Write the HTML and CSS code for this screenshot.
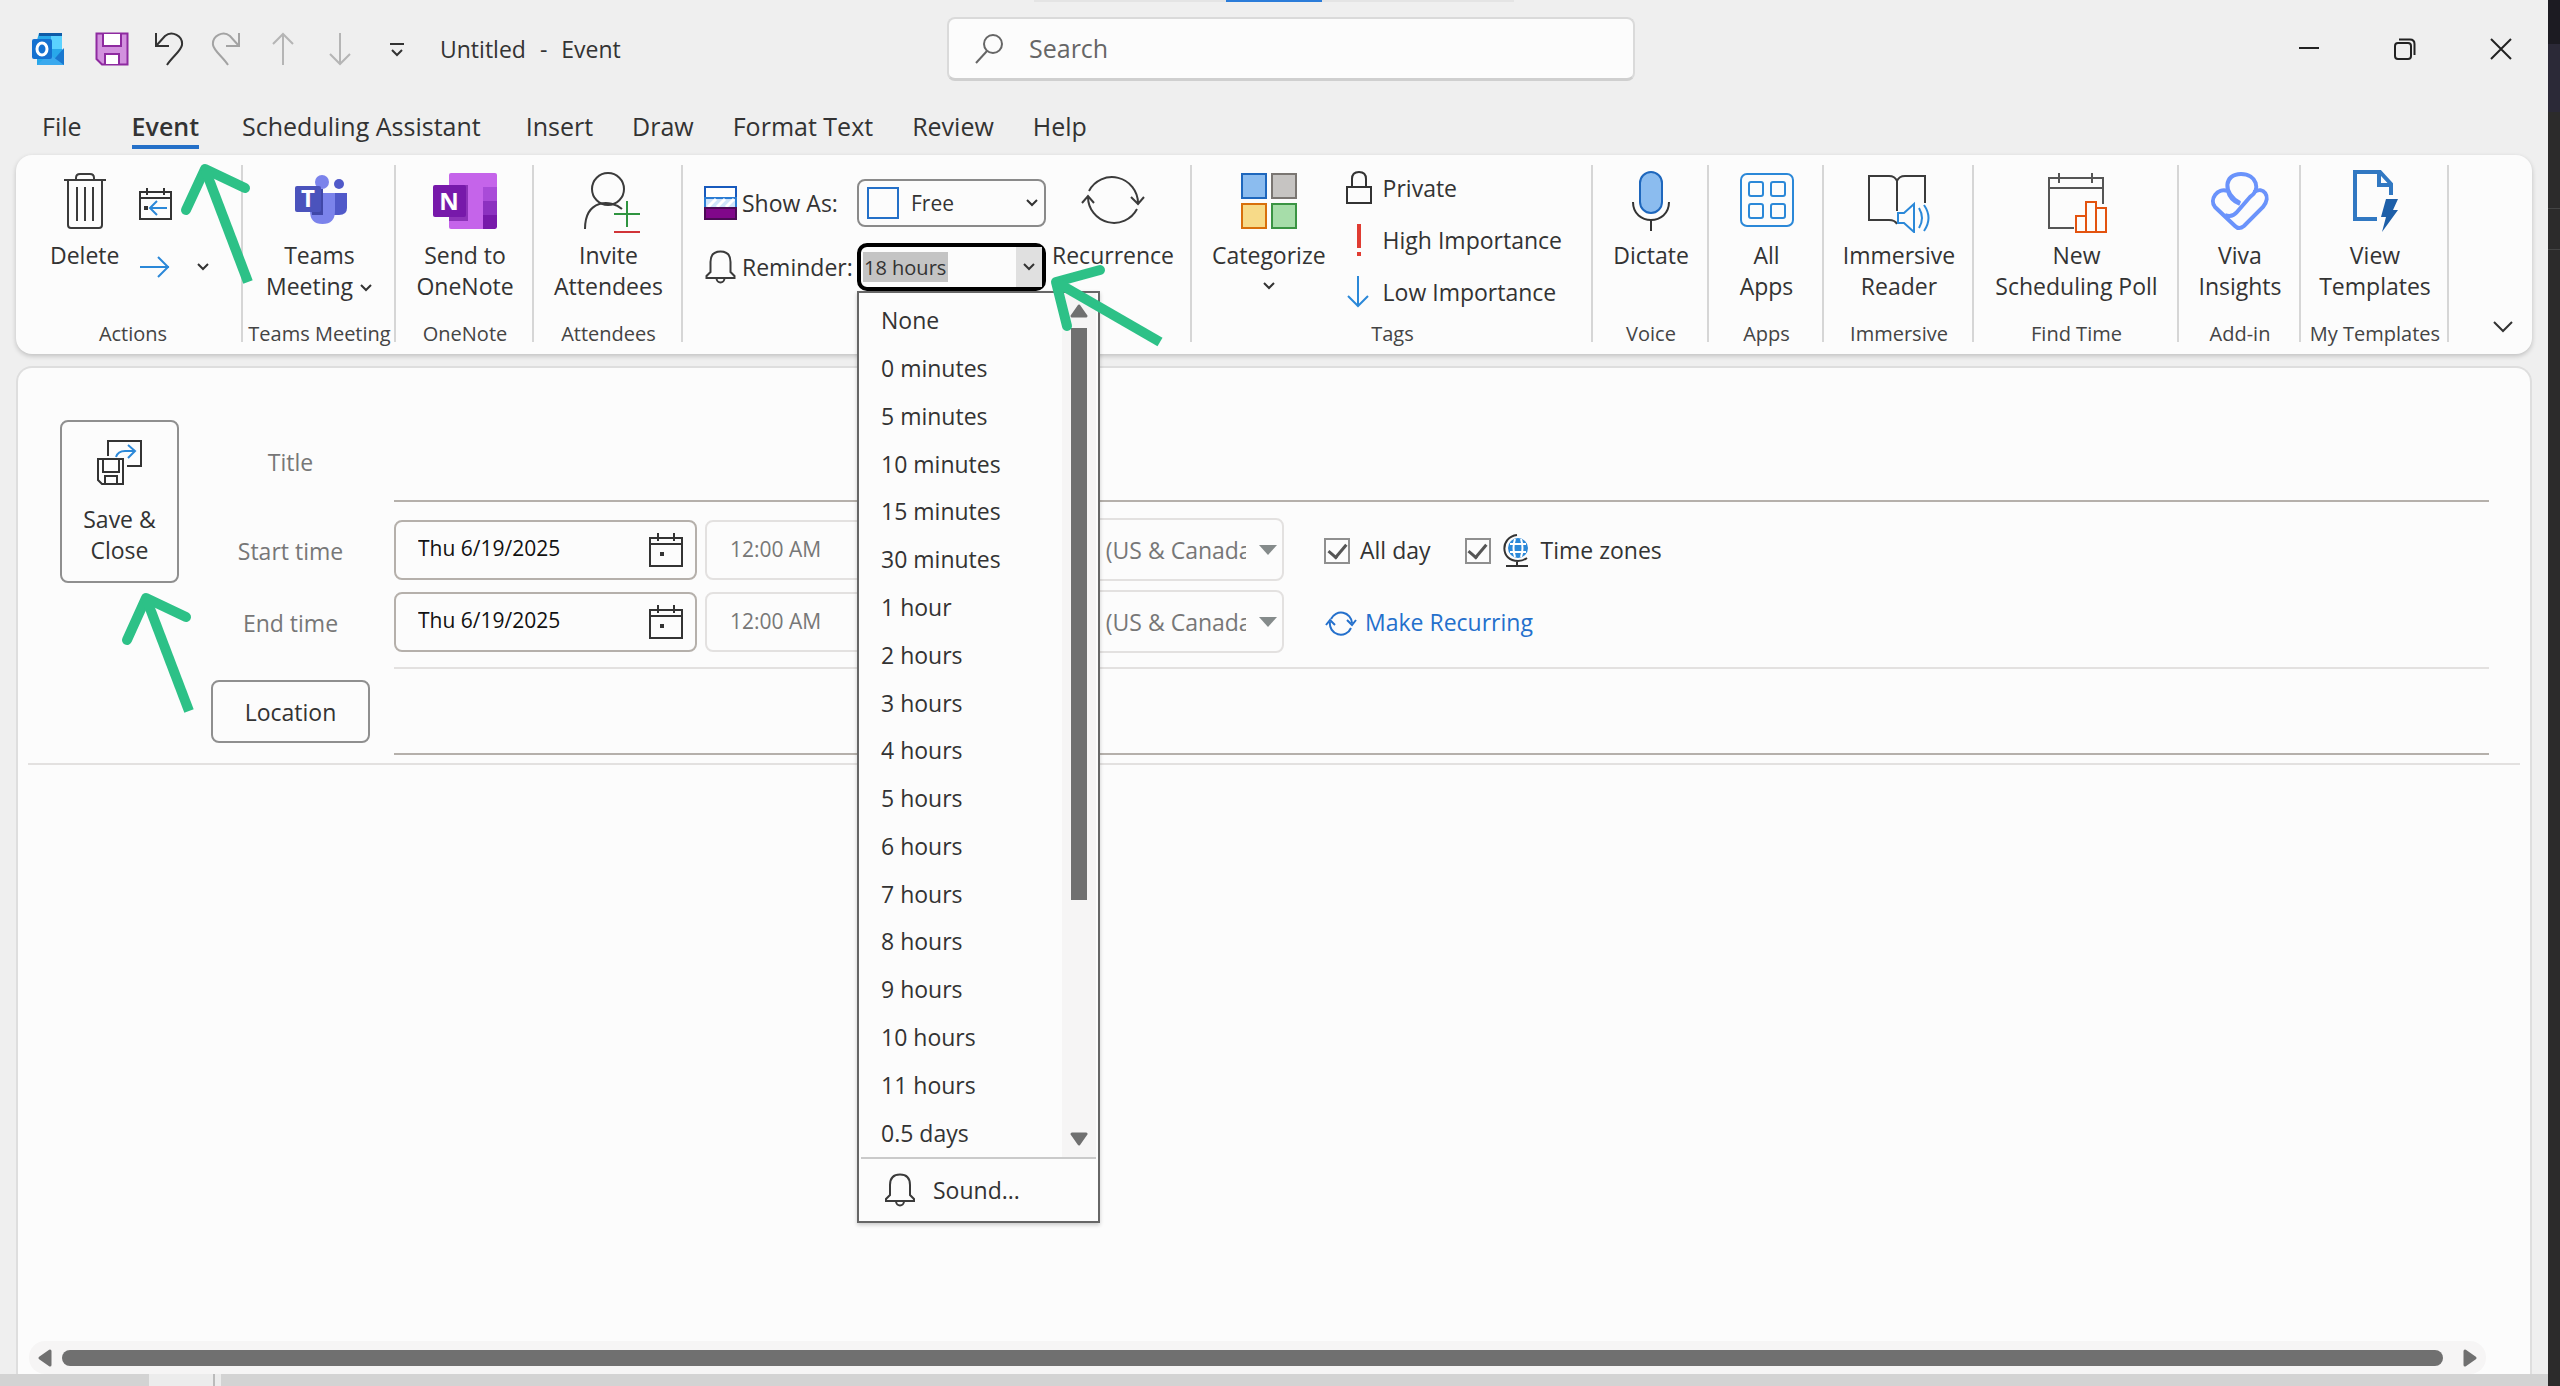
FILE: index.html
```html
<!DOCTYPE html>
<html lang="en">
<head>
  <meta charset="UTF-8">
  <meta name="viewport" content="width=device-width, initial-scale=1.0">
  <title>Untitled - Event</title>
  <link rel="stylesheet" href="styles.css">
</head>
<body>

<!-- Shared icons -->
<svg class="symbols" aria-hidden="true">
  <symbol id="bell" viewBox="0 0 32 34">
    <path d="M2 28V26L6 22V12C6 5 10 1.500 16 1.500S26 5 26 12V22L30 26V28ZM12 28C12 34 20 34 20 28" fill="none" stroke="#3b3b3b" stroke-width="2"/>
  </symbol>
  <symbol id="chevron" viewBox="0 0 14 10">
    <path d="M2 2L7 7L12 2" fill="none" stroke="#333" stroke-width="2"/>
  </symbol>
  <symbol id="calendar" viewBox="0 0 34 34">
    <path d="M1 5H33V33H1ZM1 11H33M9 0V8M25 0V8" fill="none" stroke="#333" stroke-width="2"/>
    <rect x="11" y="19" width="4" height="4" fill="#333"/>
  </symbol>
</svg>

<div class="window">
  <div class="tab-strip"><div class="tab-strip-active"></div></div>

  <!-- Title bar -->
  <header class="title-bar">
    <div class="quick-access">
      <svg class="logo" width="34" height="34" viewBox="0 0 34 34">
        <path d="M8 1H31V17L33 19V33H6V8Z" fill="#28a8ea"/>
        <path d="M20 3H31V17H20Z" fill="#5bd2ff"/>
        <path d="M8 1H31V4H8Z" fill="#0f5ca8"/>
        <path d="M33 16V33H18Z" fill="#1a78cf"/>
        <path d="M6 33L18 22L33 33Z" fill="#3aa9ee"/>
        <rect x="1" y="7" width="20" height="20" rx="2" fill="#1571d0"/>
        <ellipse cx="11" cy="17" rx="5" ry="6" fill="none" stroke="#fff" stroke-width="3"/>
      </svg>
      <button class="qa-button" aria-label="Save">
        <svg width="34" height="34" viewBox="0 0 34 34">
          <path d="M1.500 1.500H32.500V32.500H7L1.500 27Z" fill="#d291de" stroke="#8e2aa0" stroke-width="2"/>
          <path d="M8 2V14H26V2M10 32V22H24V32" fill="#fff" stroke="#8e2aa0" stroke-width="2"/>
        </svg>
      </button>
      <button class="qa-button" aria-label="Undo">
        <svg width="34" height="34" viewBox="0 0 34 34"><path d="M4 1V14H17M4 14L13 4C20 -2 31 4 30 13C29 19 20 25 15 33" fill="none" stroke="#333" stroke-width="2"/></svg>
      </button>
      <button class="qa-button" aria-label="Redo">
        <svg width="34" height="34" viewBox="0 0 34 34"><path d="M30 1V14H17M30 14L21 4C14 -2 3 4 4 13C5 19 14 25 19 33" fill="none" stroke="#a3a3a3" stroke-width="2"/></svg>
      </button>
      <button class="qa-button" aria-label="Previous item">
        <svg width="34" height="34" viewBox="0 0 34 34"><path d="M17 33V2M7 12L17 2L27 12" fill="none" stroke="#b5b5b5" stroke-width="2"/></svg>
      </button>
      <button class="qa-button" aria-label="Next item">
        <svg width="34" height="34" viewBox="0 0 34 34"><path d="M17 1V32M7 22L17 32L27 22" fill="none" stroke="#b5b5b5" stroke-width="2"/></svg>
      </button>
      <button class="qa-button" aria-label="Customize Quick Access Toolbar">
        <svg width="34" height="34" viewBox="0 0 34 34"><path d="M10 12H24M12 18L17 23L22 18" fill="none" stroke="#333" stroke-width="2"/></svg>
      </button>
      <div class="window-title"><span>Untitled</span><span>-</span><span>Event</span></div>
    </div>
    <label class="search">
      <svg width="30" height="32" viewBox="0 0 30 32"><circle cx="19" cy="11" r="9" fill="none" stroke="#666" stroke-width="2"/><path d="M13 18L2 30" stroke="#666" stroke-width="2"/></svg>
      <input type="text" placeholder="Search" aria-label="Search">
    </label>
    <div class="window-controls">
      <button aria-label="Minimize"><svg width="22" height="22" viewBox="0 0 22 22"><path d="M1 10H21" stroke="#222" stroke-width="2"/></svg></button>
      <button aria-label="Restore"><svg width="22" height="22" viewBox="0 0 22 22"><rect x="1" y="5" width="16" height="16" rx="3" fill="none" stroke="#222" stroke-width="2"/><path d="M5 1.500H16Q20.500 1.500 20.500 6V17" fill="none" stroke="#222" stroke-width="2"/></svg></button>
      <button aria-label="Close"><svg width="22" height="22" viewBox="0 0 22 22"><path d="M1 1L21 21M21 1L1 21" stroke="#222" stroke-width="2"/></svg></button>
    </div>
  </header>

  <!-- Ribbon tabs -->
  <nav class="tabs">
    <button class="tab tab-file">File</button>
    <button class="tab active">Event</button>
    <button class="tab tab-scheduling">Scheduling Assistant</button>
    <button class="tab">Insert</button>
    <button class="tab">Draw</button>
    <button class="tab">Format Text</button>
    <button class="tab">Review</button>
    <button class="tab">Help</button>
  </nav>

  <!-- Ribbon -->
  <section class="ribbon">
    <div class="group group-actions">
      <div class="group-body">
        <button class="big-button">
          <svg class="big-icon" viewBox="0 0 64 64"><path d="M11 11H53M15 11V56Q15 59 18 59H46Q49 59 49 56V11M23 11V9Q23 5 27 5H37Q41 5 41 9V11M24 18V52M32 18V52M40 18V52" fill="none" stroke="#3b3b3b" stroke-width="2"/></svg>
          <span>Delete</span>
        </button>
        <div class="small-buttons">
          <button aria-label="Copy to My Calendar"><svg width="34" height="34" viewBox="0 0 34 34"><path d="M1 5H32V32H1ZM1 11H32M8 1V8M25 1V8" fill="none" stroke="#333" stroke-width="2"/><rect x="5" y="19" width="4" height="4" fill="#333"/><path d="M28 21H11M18 14L11 21L18 28" fill="none" stroke="#2b88d8" stroke-width="2"/></svg></button>
          <div class="forward">
            <button aria-label="Forward"><svg width="34" height="24" viewBox="0 0 34 24"><path d="M1 12H30M19 2L29 12L19 22" fill="none" stroke="#2b88d8" stroke-width="2"/></svg></button>
            <button aria-label="More forward options"><svg width="14" height="10"><use href="#chevron"/></svg></button>
          </div>
        </div>
      </div>
      <div class="group-label">Actions</div>
    </div>

    <div class="group group-teams">
      <div class="group-body">
        <button class="big-button">
          <svg class="big-icon" viewBox="0 0 64 64">
            <circle cx="34" cy="13" r="7" fill="#7b83eb"/><circle cx="51" cy="15" r="5" fill="#5059c9"/>
            <path d="M43 24H59V39Q59 46 51 46H43Z" fill="#5059c9"/>
            <path d="M22 24H47V42Q47 55 34.500 55T22 42Z" fill="#7b83eb"/>
            <path d="M22 20H35V46H24Z" fill="#4047a8"/>
            <rect x="7" y="17" width="26" height="26" rx="2" fill="#4b53bc"/>
            <text x="20" y="38" class="logo-letter">T</text>
          </svg>
          <span>Teams</span><span>Meeting <svg width="14" height="14" viewBox="0 -2 14 14"><use href="#chevron" width="14" height="10"/></svg></span>
        </button>
      </div>
      <div class="group-label">Teams Meeting</div>
    </div>

    <div class="group group-onenote">
      <div class="group-body">
        <button class="big-button">
          <svg class="big-icon" viewBox="0 0 64 64">
            <rect x="16" y="4" width="48" height="56" rx="2" fill="#c564ea"/>
            <path d="M50 18H64V32H50Z" fill="#a94bd8"/><path d="M50 32H64V46H50Z" fill="#8c31c0"/><path d="M50 46H64V58L62 60H50Z" fill="#7719aa"/>
            <path d="M16 16H35V52H16Z" fill="#681297" opacity="0.600"/>
            <rect x="0" y="16" width="33" height="32" rx="2" fill="#7719aa"/>
            <text x="16" y="41" class="logo-letter">N</text>
          </svg>
          <span>Send to</span><span>OneNote</span>
        </button>
      </div>
      <div class="group-label">OneNote</div>
    </div>

    <div class="group group-attendees">
      <div class="group-body">
        <button class="big-button">
          <svg class="big-icon" viewBox="0 0 64 64"><ellipse cx="32" cy="20" rx="16" ry="16" fill="none" stroke="#3b3b3b" stroke-width="2"/><path d="M9 60C9 30 35 30 46 40" fill="none" stroke="#3b3b3b" stroke-width="2"/><path d="M38 45H64M51 32V58" stroke="#2f9440" stroke-width="2"/><path d="M38 63H64" stroke="#d13438" stroke-width="2"/></svg>
          <span>Invite</span><span>Attendees</span>
        </button>
      </div>
      <div class="group-label">Attendees</div>
    </div>

    <div class="group group-options">
      <div class="group-body">
        <div class="options">
          <div class="option-row">
            <label for="showAs">
              <svg width="33" height="34" viewBox="0 0 33 34">
                <path d="M1 1H32V12H1Z" fill="#fff" stroke="#185abd" stroke-width="2"/>
                <path d="M1 12H32V22H1Z" fill="#cfe4fa" stroke="#2b7cd3" stroke-width="2"/>
                <path d="M4 21L12 13M13 21L21 13M22 21L30 13" stroke="#fff" stroke-width="3"/>
                <path d="M1 22H32V33H1Z" fill="#80078a" stroke="#4b0a55" stroke-width="2"/>
              </svg>
              Show As:
            </label>
            <div class="show-as">
              <span class="free-swatch"></span>
              <select id="showAs"><option>Free</option><option>Tentative</option><option>Busy</option></select>
              <svg class="show-as-chevron" width="14" height="10"><use href="#chevron"/></svg>
            </div>
          </div>
          <div class="option-row">
            <label for="reminder"><svg width="33" height="34"><use href="#bell"/></svg>Reminder:</label>
            <div class="reminder">
              <input id="reminder" type="text" value="18 hours">
              <button aria-label="Open reminder list"><svg width="14" height="10"><use href="#chevron"/></svg></button>
              <div class="reminder-menu">
                <div class="reminder-scroll">
                  <ul role="listbox" aria-label="Reminder">
                    <li role="option">None</li>
                    <li role="option">0 minutes</li>
                    <li role="option">5 minutes</li>
                    <li role="option">10 minutes</li>
                    <li role="option">15 minutes</li>
                    <li role="option">30 minutes</li>
                    <li role="option">1 hour</li>
                    <li role="option">2 hours</li>
                    <li role="option">3 hours</li>
                    <li role="option">4 hours</li>
                    <li role="option">5 hours</li>
                    <li role="option">6 hours</li>
                    <li role="option">7 hours</li>
                    <li role="option">8 hours</li>
                    <li role="option">9 hours</li>
                    <li role="option">10 hours</li>
                    <li role="option">11 hours</li>
                    <li role="option">0.5 days</li>
                  </ul>
                  <div class="v-scrollbar">
                    <svg width="18" height="14" viewBox="0 0 18 14"><path d="M9 2L16 12H2Z" fill="#707070" stroke="#707070" stroke-width="3" stroke-linejoin="round"/></svg>
                    <div class="v-track"><div class="v-thumb"></div></div>
                    <svg width="18" height="14" viewBox="0 0 18 14"><path d="M9 12L16 2H2Z" fill="#707070" stroke="#707070" stroke-width="3" stroke-linejoin="round"/></svg>
                  </div>
                </div>
                <button class="sound"><svg width="32" height="34"><use href="#bell"/></svg>Sound...</button>
              </div>
            </div>
          </div>
        </div>
        <button class="big-button">
          <svg class="big-icon" viewBox="0 0 64 64"><path d="M8 22A26 26 0 0 1 57 34M56 40A26 26 0 0 1 7 28M50 28L57 35L63 28M1 34L7 27L13 34" fill="none" stroke="#3b3b3b" stroke-width="2"/></svg>
          <span>Recurrence</span>
        </button>
      </div>
    </div>

    <div class="group group-tags">
      <div class="group-body">
        <button class="big-button">
          <svg class="big-icon" viewBox="0 0 64 64"><rect x="5" y="5" width="24" height="24" fill="#8bbcef" stroke="#1e67bd" stroke-width="2"/><rect x="35" y="5" width="24" height="24" fill="#c6c4c2" stroke="#7a7672" stroke-width="2"/><rect x="5" y="35" width="24" height="24" fill="#f7da88" stroke="#d86f0c" stroke-width="2"/><rect x="35" y="35" width="24" height="24" fill="#a6dda9" stroke="#3a9443" stroke-width="2"/></svg>
          <span>Categorize</span><span><svg width="14" height="14" viewBox="0 0 14 14"><use href="#chevron" width="14" height="10"/></svg></span>
        </button>
        <div class="tag-list">
          <button><svg width="26" height="34" viewBox="0 0 26 34"><path d="M1 16H25V32H1ZM6 16V8Q6 1 13 1T20 8V16" fill="none" stroke="#333" stroke-width="2"/></svg>Private</button>
          <button><svg width="26" height="34" viewBox="0 0 26 34"><path d="M13 1V25M13 29V33" stroke="#e03c32" stroke-width="4"/></svg>High Importance</button>
          <button><svg width="26" height="34" viewBox="0 0 26 34"><path d="M12 1V31M2 21L12 31L22 21" fill="none" stroke="#2b88d8" stroke-width="2"/></svg>Low Importance</button>
        </div>
      </div>
      <div class="group-label">Tags</div>
    </div>

    <div class="group group-voice">
      <div class="group-body">
        <button class="big-button">
          <svg class="big-icon" viewBox="0 0 64 64"><rect x="21" y="3" width="22" height="41" rx="11" fill="#8bbcef" stroke="#1e67bd" stroke-width="2"/><path d="M14 33C14 57 50 57 50 33M32 51V62" fill="none" stroke="#333" stroke-width="2"/></svg>
          <span>Dictate</span>
        </button>
      </div>
      <div class="group-label">Voice</div>
    </div>

    <div class="group group-apps">
      <div class="group-body">
        <button class="big-button">
          <svg class="big-icon" viewBox="0 0 64 64" fill="none" stroke="#2b88d8" stroke-width="2"><rect x="6" y="5" width="52" height="52" rx="6"/><rect x="14" y="13" width="14" height="14" rx="2"/><rect x="36" y="13" width="14" height="14" rx="2"/><rect x="14" y="35" width="14" height="14" rx="2"/><rect x="36" y="35" width="14" height="14" rx="2"/></svg>
          <span>All</span><span>Apps</span>
        </button>
      </div>
      <div class="group-label">Apps</div>
    </div>

    <div class="group group-immersive">
      <div class="group-body">
        <button class="big-button">
          <svg class="big-icon" viewBox="0 0 64 64" fill="none" stroke="#3b3b3b" stroke-width="2"><path d="M30 42V12Q28 7 22 7H2V51H22Q28 51 30 55M30 12Q32 7 38 7H58V34"/><path d="M31 44H37L47 35V63L37 54H31ZM52 39Q58 49 52 59M57 36Q66 49 57 62" stroke="#2b88d8"/></svg>
          <span>Immersive</span><span>Reader</span>
        </button>
      </div>
      <div class="group-label">Immersive</div>
    </div>

    <div class="group group-findtime">
      <div class="group-body">
        <button class="big-button">
          <svg class="big-icon" viewBox="0 0 64 64" fill="none" stroke="#555" stroke-width="2"><path d="M30 59H5V9H59V35M5 19H59M15 4V14M48 4V14"/><path d="M32 63V47H42V63ZM42 63V33H52V63ZM52 63V39H62V63Z" stroke="#e3530f"/></svg>
          <span>New</span><span>Scheduling Poll</span>
        </button>
      </div>
      <div class="group-label">Find Time</div>
    </div>

    <div class="group group-addin">
      <div class="group-body">
        <button class="big-button">
          <svg class="big-icon" viewBox="0 0 64 64" fill="none" stroke="#6a93fb" stroke-width="4"><path d="M32 34C14 24 16 5 33 5C49 5 53 21 42 28L29 43Q24 49 17 46"/><path d="M20 22C9 18 1 31 7 38L27 57Q31 61 36 57L55 38C64 27 55 17 46 23M20 22Q22 31 32 35"/></svg>
          <span>Viva</span><span>Insights</span>
        </button>
      </div>
      <div class="group-label">Add-in</div>
    </div>

    <div class="group group-templates">
      <div class="group-body">
        <button class="big-button">
          <svg class="big-icon" viewBox="0 0 64 64"><path d="M34 50H12V3H37L48 15V26M36 3V16H48" fill="none" stroke="#3178c2" stroke-width="4"/><path d="M43 30H55L50 41H55L39 63L43 48H38Z" fill="#1e5fa8"/></svg>
          <span>View</span><span>Templates</span>
        </button>
      </div>
      <div class="group-label">My Templates</div>
    </div>

    <button class="collapse" aria-label="Ribbon display options"><svg width="22" height="14" viewBox="0 0 22 14"><path d="M2 2L11 11L20 2" fill="none" stroke="#333" stroke-width="2"/></svg></button>
  </section>

  <!-- Event form -->
  <main class="panel">
    <form class="event-form">
      <button type="button" class="outline-button save-close">
        <svg width="46" height="46" viewBox="0 0 46 46">
          <path d="M11 16V1H44V26H30M1 19H26V44H5L1 40ZM6 19V32H22V19M8 44V36H20V44" fill="none" stroke="#333" stroke-width="2"/>
          <path d="M19 17Q21 11 28 11H37M31 5L38 11L31 18" fill="none" stroke="#2b88d8" stroke-width="2"/>
        </svg>
        <span>Save &amp;</span><span>Close</span>
      </button>
      <div class="fields">
        <div class="row row-title">
          <label for="title">Title</label>
          <input id="title" class="line-input" type="text">
        </div>
        <div class="row">
          <label for="startDate">Start time</label>
          <div class="time-fields">
            <div class="date-box"><input id="startDate" type="text" value="Thu 6/19/2025"><button type="button" aria-label="Pick start date"><svg width="34" height="34"><use href="#calendar"/></svg></button></div>
            <input class="time-box" type="text" value="12:00 AM" aria-label="Start hour" disabled>
            <div class="zone"><select aria-label="Start time zone" disabled><option>Eastern Time (US &amp; Canada)</option></select></div>
            <label class="check"><input type="checkbox" checked>All day</label>
            <label class="check">
              <input type="checkbox" checked>
              <svg class="globe" width="26" height="34" viewBox="0 0 26 34">
                <circle cx="15" cy="14" r="10" fill="#2b88d8"/>
                <path d="M7 10H23M7 18H23M12 5Q9 14 12 23M18 5Q21 14 18 23" fill="none" stroke="#fff" stroke-width="2"/>
                <path d="M14 1C-3 3 -3 27 15 27Q20 27 24 24M14 27V32M3 32H25" fill="none" stroke="#333" stroke-width="2"/>
              </svg>
              Time zones
            </label>
          </div>
        </div>
        <div class="row">
          <label for="endDate">End time</label>
          <div class="time-fields">
            <div class="date-box"><input id="endDate" type="text" value="Thu 6/19/2025"><button type="button" aria-label="Pick end date"><svg width="34" height="34"><use href="#calendar"/></svg></button></div>
            <input class="time-box" type="text" value="12:00 AM" aria-label="End hour" disabled>
            <div class="zone"><select aria-label="End time zone" disabled><option>Eastern Time (US &amp; Canada)</option></select></div>
            <a class="recurring" href="#">
              <svg width="32" height="26" viewBox="0 0 32 26"><path d="M6 9A11 11 0 0 1 27 13M26 18A11 11 0 0 1 5 12M22 10L27 15L31 10M1 15L5 10L10 15" fill="none" stroke="#2470cc" stroke-width="2"/></svg>
              Make Recurring
            </a>
          </div>
        </div>
        <div class="row row-location">
          <button type="button" class="outline-button location">Location</button>
          <input class="line-input" type="text" aria-label="Location">
        </div>
      </div>
    </form>
    <div class="h-scrollbar">
      <svg width="14" height="18" viewBox="0 0 14 18"><path d="M2 9L12 2V16Z" fill="#707070" stroke="#707070" stroke-width="3" stroke-linejoin="round"/></svg>
      <div class="h-thumb"></div>
      <svg width="14" height="18" viewBox="0 0 14 18"><path d="M12 9L2 2V16Z" fill="#707070" stroke="#707070" stroke-width="3" stroke-linejoin="round"/></svg>
    </div>
  </main>
  <div class="bottom-strip"><div class="bottom-tab"></div></div>
</div>
<div class="backdrop"><div class="backdrop-top"></div><div class="backdrop-mid"></div><div class="backdrop-gap"></div><div class="backdrop-row"></div></div>

<!-- Pointer arrows -->
<svg class="arrows" width="1240" height="740" viewBox="0 0 1240 740" aria-hidden="true">
  <g fill="none" stroke="#2dc187" stroke-width="10" stroke-linejoin="round">
    <path d="M186 210L205 169L245 188" stroke-linecap="round"/><path d="M205 169L248 282"/>
    <path d="M1100 270L1056 282L1067 326" stroke-linecap="round"/><path d="M1056 282L1160 342"/>
    <path d="M127 640L146 598L186 617" stroke-linecap="round"/><path d="M146 598L189 711"/>
  </g>
</svg>

</body>
</html>
```
FILE: styles.css
```css
/* Base */
* {
  box-sizing: border-box;
}
body {
  margin: 0;
  display: flex;
  min-height: 100vh;
  background-color: #efefef;
  color: #333;
  font-family: "Open Sans", "Noto Sans", sans-serif;
  font-size: 23px;
  line-height: 31px;
}
button, input, select {
  font: inherit;
  color: inherit;
  border: none;
  background: none;
  padding: 0;
  margin: 0;
  min-width: 0;
  outline: none;
}
svg {
  flex: none;
}
.symbols {
  position: absolute;
  width: 0;
  height: 0;
}
.window {
  flex: 1;
  min-width: 0;
  display: flex;
  flex-direction: column;
}
.tab-strip {
  width: 480px;
  height: 2px;
  margin-left: 1034px;
  background-color: #e4e4e4;
}
.tab-strip-active {
  width: 96px;
  height: 2px;
  margin: 0 auto;
  background-color: #2b7cd9;
}

/* Title bar */
.title-bar {
  display: grid;
  grid-template-columns: 947px minmax(0, 688px) 1fr;
  align-items: center;
  height: 94px;
}
.quick-access {
  display: flex;
  align-items: center;
  gap: 23px;
  padding-left: 31px;
}
.logo {
  margin-right: 7px;
}
.qa-button {
  display: flex;
}
.window-title {
  display: flex;
  gap: 14px;
  margin-left: 3px;
}
.search {
  display: flex;
  align-items: center;
  gap: 25px;
  height: 64px;
  padding: 0 25px;
  background-color: #fcfcfc;
  border: 2px solid #dadada;
  border-bottom: 3px solid #cfcfcf;
  border-radius: 8px;
  font-size: 25px;
}
.search input {
  flex: 1;
}
.search input::placeholder {
  color: #666;
  opacity: 1;
}
.window-controls {
  display: flex;
  justify-content: flex-end;
  gap: 74px;
  padding-right: 36px;
}
.window-controls button {
  display: flex;
}

/* Tabs */
.tabs {
  display: flex;
  gap: 39px;
  height: 59px;
  padding: 14px 42px 0;
  font-size: 25px;
}
.tab {
  height: 39px;
  line-height: 33px;
  padding-bottom: 6px;
}
.tab-file {
  margin-right: 11px;
}
.tab-scheduling {
  margin: 0 6px 0 4px;
}
.tab.active {
  font-weight: 600;
  background: linear-gradient(#2470c8, #2470c8) bottom / 100% 4px no-repeat;
}

/* Ribbon */
.ribbon {
  display: flex;
  height: 199px;
  margin: 0 16px;
  background-color: #fcfcfc;
  border-radius: 16px;
  box-shadow: 0 2px 5px rgba(0, 0, 0, 0.2);
}
.group {
  position: relative;
  display: flex;
  flex-direction: column;
  padding-bottom: 8px;
}
.group::after {
  content: "";
  position: absolute;
  top: 10px;
  right: 0;
  bottom: 12px;
  width: 2px;
  background-color: #d6d6d6;
}
.group-body {
  flex: 1;
  display: flex;
  justify-content: center;
}
.group-label {
  font-size: 20px;
  line-height: 24px;
  text-align: center;
  color: #444;
}
.group-actions {
  width: 227px;
  padding-left: 7px;
}
.group-teams { width: 153px; }
.group-onenote { width: 138px; }
.group-attendees { width: 149px; }
.group-options { width: 509px; }
.group-tags { width: 401px; }
.group-voice { width: 116px; }
.group-apps { width: 115px; }
.group-immersive { width: 150px; }
.group-findtime { width: 205px; }
.group-addin { width: 122px; }
.group-templates { width: 148px; }
.big-button {
  display: flex;
  flex-direction: column;
  align-items: center;
  padding-top: 14px;
  white-space: nowrap;
}
.big-icon {
  width: 64px;
  height: 64px;
  margin-bottom: 7px;
}
.logo-letter {
  fill: #fff;
  font-size: 24px;
  font-weight: 700;
  text-anchor: middle;
}
.group-actions .group-body {
  justify-content: flex-start;
  padding-left: 27px;
  gap: 20px;
}
.small-buttons {
  display: flex;
  flex-direction: column;
  gap: 34px;
  padding-top: 32px;
}
.small-buttons button {
  display: flex;
}
.forward {
  display: flex;
  align-items: center;
  gap: 23px;
}

/* Show As and Reminder */
.options {
  display: flex;
  flex-direction: column;
  gap: 16px;
  padding-top: 24px;
}
.group-options .group-body {
  justify-content: flex-start;
  padding-left: 21px;
  gap: 6px;
}
.option-row {
  display: flex;
  gap: 3px;
}
.option-row label {
  display: flex;
  align-items: center;
  gap: 5px;
  width: 150px;
  white-space: nowrap;
}
.show-as {
  display: flex;
  align-items: center;
  width: 189px;
  height: 48px;
  padding: 0 5px 0 8px;
  border: 2px solid #8a8a8a;
  border-radius: 8px;
  font-size: 21px;
}
.free-swatch {
  flex: none;
  width: 32px;
  height: 32px;
  border: 2px solid #2470c8;
}
.show-as select {
  flex: 1;
  appearance: none;
  padding-left: 12px;
}
.reminder {
  position: relative;
  display: flex;
  width: 189px;
  height: 48px;
  border: 4px solid #000;
  border-radius: 10px;
}
.reminder input {
  flex: 1;
  padding-left: 3px;
  font-size: 20px;
  background: linear-gradient(#c4c4c4, #c4c4c4) 2px center / 85px 30px no-repeat;
}
.reminder > button {
  display: flex;
  align-items: center;
  justify-content: center;
  width: 26px;
  background-color: #e0e0e0;
}
.reminder-menu {
  position: absolute;
  z-index: 2;
  top: 44px;
  left: -4px;
  width: 243px;
  background-color: #fcfcfc;
  border: 2px solid #666;
  box-shadow: 0 2px 4px rgba(0, 0, 0, 0.2);
}
.reminder-scroll {
  display: flex;
  margin: 0 2px;
  border-bottom: 2px solid #cacaca;
}
.reminder-scroll ul {
  flex: 1;
  display: grid;
  grid-auto-rows: 1fr;
  height: 864px;
  margin: 0;
  padding: 4px 0 0 20px;
  list-style: none;
}
.reminder-scroll li {
  display: flex;
  align-items: center;
}
.v-scrollbar {
  display: flex;
  flex-direction: column;
  align-items: center;
  gap: 10px;
  width: 34px;
  padding: 11px 0;
  background-color: #f6f5f5;
}
.v-track {
  flex: 1;
}
.v-thumb {
  width: 16px;
  height: 72%;
  background-color: #707070;
}
.sound {
  display: flex;
  align-items: center;
  gap: 17px;
  width: 100%;
  height: 62px;
  padding-left: 25px;
}

/* Tags */
.group-tags .group-body {
  justify-content: flex-start;
  padding-left: 20px;
  gap: 20px;
}
.tag-list {
  display: flex;
  flex-direction: column;
  padding-top: 7px;
}
.tag-list button {
  display: flex;
  align-items: center;
  gap: 11px;
  height: 52px;
}
.collapse {
  align-self: flex-end;
  display: flex;
  margin: 0 18px 20px auto;
}

/* Event form */
.panel {
  flex: 1;
  display: flex;
  flex-direction: column;
  margin: 12px 16px 0;
  background-color: #fcfcfc;
  border: 2px solid #dedede;
  border-bottom: none;
  border-radius: 16px 16px 0 0;
}
.event-form {
  display: flex;
  align-items: flex-start;
  gap: 32px;
  margin: 0 10px;
  padding: 52px 31px 8px 32px;
  border-bottom: 2px solid #e3e1e0;
}
.outline-button {
  border: 2px solid #8f8f8f;
  border-radius: 8px;
}
.save-close {
  display: flex;
  flex-direction: column;
  align-items: center;
  width: 119px;
  height: 163px;
  padding-top: 18px;
}
.save-close svg {
  margin-bottom: 18px;
}
.fields {
  flex: 1;
  display: flex;
  flex-direction: column;
  gap: 9px;
}
.row {
  display: grid;
  grid-template-columns: 159px 1fr;
  column-gap: 24px;
  align-items: center;
  height: 63px;
}
.row > label {
  padding-top: 3px;
  text-align: center;
  color: #777;
}
.row-title {
  height: 82px;
  margin-bottom: 7px;
}
.line-input {
  align-self: stretch;
  border-bottom: 2px solid #b5b0ab;
}
.row-location {
  height: 88px;
  margin-top: 5px;
}
.row-location .line-input {
  border-top: 2px solid #e3e1e0;
}
.location {
  height: 63px;
  padding-top: 2px;
}
.time-fields {
  display: flex;
  align-items: center;
}
.date-box {
  display: flex;
  align-items: center;
  width: 303px;
  height: 60px;
  padding: 0 12px 0 22px;
  border: 2px solid #b5b0ab;
  border-radius: 8px;
  font-size: 21px;
  color: #111;
}
.date-box input {
  flex: 1;
  padding-bottom: 2px;
}
.date-box button {
  display: flex;
}
.time-box {
  width: 233px;
  height: 60px;
  margin: 0 8px;
  padding: 0 0 2px 23px;
  border: 2px solid #e3e1e0;
  border-radius: 8px;
  font-size: 21px;
  color: #777;
}
.zone {
  position: relative;
  width: 338px;
}
.zone select {
  appearance: none;
  width: 100%;
  height: 63px;
  padding: 2px 36px 0 12px;
  border: 2px solid #e3e1e0;
  border-radius: 8px;
  color: #777;
  opacity: 1;
}
.zone::after {
  content: "";
  position: absolute;
  top: 27px;
  right: 7px;
  border: 9px solid transparent;
  border-top: 10px solid #858b8b;
  border-bottom: none;
}
.check {
  display: flex;
  align-items: center;
  gap: 10px;
  margin-left: 34px;
  padding-top: 2px;
}
.zone + .check {
  margin-left: 40px;
}
.check input {
  appearance: none;
  display: grid;
  place-items: center;
  width: 26px;
  height: 26px;
  border: 2px solid #8f8f8f;
}
.check input:checked::before {
  content: "";
  width: 8px;
  height: 15px;
  margin-bottom: 4px;
  border: solid #555;
  border-width: 0 3px 3px 0;
  transform: rotate(40deg);
}
.globe {
  margin: 0 2px;
}
.recurring {
  display: flex;
  align-items: center;
  gap: 8px;
  margin-left: 41px;
  padding-top: 2px;
  color: #2470cc;
  text-decoration: none;
}

/* Horizontal scrollbar */
.h-scrollbar {
  display: flex;
  align-items: center;
  gap: 10px;
  height: 33px;
  margin: auto 44px 0 11px;
  padding: 0 9px;
  background-color: #f6f5f5;
  border-radius: 16px;
}
.h-thumb {
  flex: 1;
  height: 16px;
  margin-right: 10px;
  background-color: #707070;
  border-radius: 8px;
}
.bottom-strip {
  height: 12px;
  padding-left: 149px;
  background-color: #d3d3d3;
}
.bottom-tab {
  width: 72px;
  height: 12px;
  background: linear-gradient(#bbb, #bbb) 64px 0 / 2px 12px no-repeat #ececec;
}

/* Desktop behind the window */
.backdrop {
  width: 12px;
  background-color: #2c2b2b;
}
.backdrop-top {
  height: 44px;
  background-color: #1c1b22;
}
.backdrop-mid {
  height: 68px;
  background-color: #2b2937;
}
.backdrop-gap {
  height: 96px;
}
.backdrop-row {
  height: 42px;
  border: solid #444;
  border-width: 1px 0;
}
.arrows {
  position: absolute;
  z-index: 3;
  top: 0;
  left: 0;
  pointer-events: none;
}
```
